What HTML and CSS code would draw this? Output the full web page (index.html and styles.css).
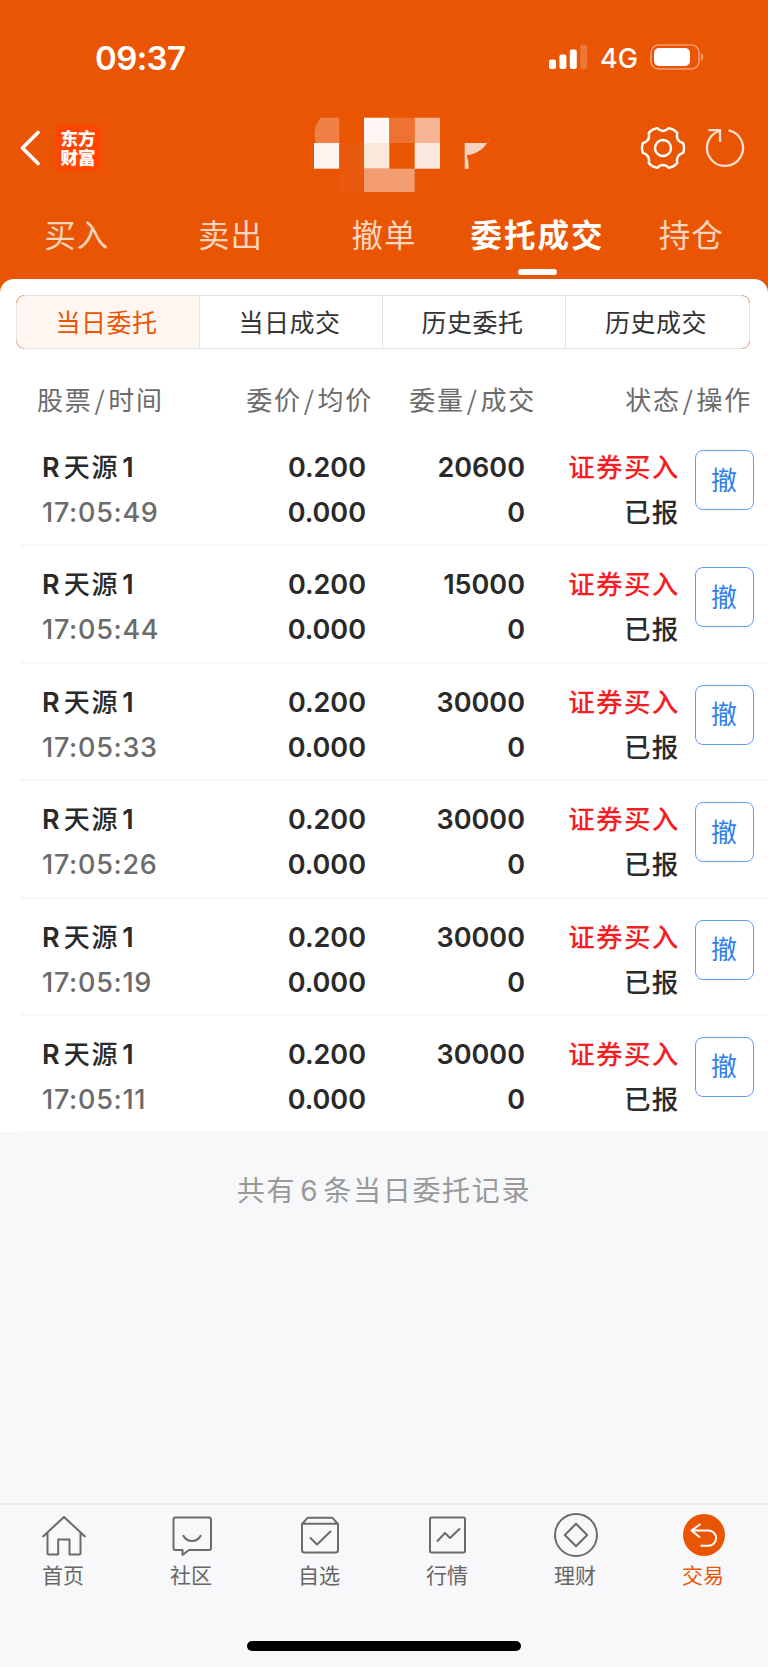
FILE: index.html
```html
<!DOCTYPE html>
<html lang="zh-CN">
<head>
  <meta charset="UTF-8" />
  <meta name="viewport" content="width=device-width, initial-scale=1.0" />
  <title>委托成交</title>
  <link rel="stylesheet" href="styles.css">
</head>
<body>
  <header class="header">
    <div class="status-bar">
      <div class="clock">09:37</div>
      <div class="status-icons">
        <svg class="signal" width="39" height="26" viewBox="0 0 39 26" fill="#fff">
          <rect x="0" y="15.5" width="7" height="9.5" rx="2" />
          <rect x="10.4" y="10.5" width="7" height="14.5" rx="2" />
          <rect x="20.8" y="5.5" width="7" height="19.5" rx="2" />
          <rect x="31.2" y="0.5" width="7" height="24.5" rx="2" opacity="0.2" />
        </svg>
        <span class="network">4G</span>
        <svg class="battery" width="55" height="26" viewBox="0 0 55 26">
          <rect x="1" y="1" width="48" height="24" rx="7.5" fill="none" stroke="#fff" stroke-opacity="0.42" stroke-width="1.6" />
          <rect x="4" y="4" width="36" height="18" rx="5" fill="#fff" />
          <path d="M51 9v8c3-1.200 3-6.800 0-8z" fill="#fff" opacity="0.45" />
        </svg>
      </div>
    </div>

    <div class="title-bar">
      <div class="title-left">
        <svg width="22" height="36" viewBox="0 0 22 36" fill="none" stroke="#fff" stroke-width="3.600" stroke-linecap="round" stroke-linejoin="round">
          <path d="M18 2.500L2.500 18l15.500 15.500" />
        </svg>
        <div class="logo">东方<br>财富</div>
      </div>
      <!-- masked account name -->
      <svg class="account" width="180" height="76" viewBox="0 0 180 76">
        <path d="M7 .7h18.300v25.300H2C-1 17 1 7 7 .7z" fill="#f08045" />
        <rect x="0" y="26" width="25.300" height="25.700" fill="#fef3ee" />
        <rect x="25.300" y="26" width="24.700" height="49" fill="#ea5a0e" />
        <rect x="50" y=".7" width="25.300" height="25.300" fill="#fff7f4" />
        <rect x="50" y="26" width="25.300" height="25.700" fill="#fae8dc" />
        <rect x="50" y="51.700" width="50.700" height="23.300" fill="#f29c70" />
        <rect x="75.300" y=".7" width="25.400" height="25.300" fill="#ee7231" />
        <rect x="100.700" y=".7" width="25.300" height="25.300" fill="#f6b492" />
        <rect x="100.700" y="26" width="25.300" height="25.700" fill="#fde9e0" />
        <path d="M150.700 26h22.300c-4.500 7-11 11-20.200 12.300q2.200 6.500 1.900 13.400h-4z" fill="#f9d3c1" />
        <path d="M173 26q3-4 5-9.500q-1 4-4 9.500z" fill="#f08045" />
      </svg>
      <div class="title-right">
        <svg width="46" height="46" viewBox="-23.500 -23.500 47 47" fill="none" stroke="#fff" stroke-width="2.500" stroke-linejoin="round">
          <path d="M6-20.300Q11.200-19.400 14.600-15.400Q12.700-7.300 20.600-4.900Q22.400 0 20.600 4.900Q12.700 7.300 14.600 15.400Q11.200 19.400 6 20.300Q0 14.600-6 20.300Q-11.200 19.400-14.600 15.400Q-12.700 7.300-20.600 4.900Q-22.400 0-20.600-4.900Q-12.700-7.300-14.600-15.400Q-11.200-19.400-6-20.300Q0-14.600 6-20.300Z" />
          <circle r="8.200" />
        </svg>
        <svg width="42" height="42" viewBox="-21 -21 42 42" fill="none" stroke="#fbe0d2" stroke-width="2.300">
          <path d="M3.500-17.700A18 18 0 1 1-6-17" />
          <path d="M-16.500-17.800H-5V-6" />
        </svg>
      </div>
    </div>

    <nav class="tabs">
      <a class="tab">买入</a>
      <a class="tab">卖出</a>
      <a class="tab">撤单</a>
      <a class="tab active">委托成交</a>
      <a class="tab">持仓</a>
    </nav>
  </header>

  <main class="panel">
    <div class="segments">
      <div class="segment active">当日委托</div>
      <div class="segment">当日成交</div>
      <div class="segment">历史委托</div>
      <div class="segment">历史成交</div>
    </div>

    <div class="list-head">
      <div>股票<i>/</i>时间</div>
      <div>委价<i>/</i>均价</div>
      <div>委量<i>/</i>成交</div>
      <div>状态<i>/</i>操作</div>
    </div>

    <div class="orders">
      <div class="order">
        <div class="stock"><b>R<span>天源</span>1</b><time>17:05:49</time></div>
        <div class="num">0.200<br>0.000</div>
        <div class="num">20600<br>0</div>
        <div class="state"><span class="buy">证券买入</span><br>已报</div>
        <button class="cancel">撤</button>
      </div>
      <div class="order">
        <div class="stock"><b>R<span>天源</span>1</b><time>17:05:44</time></div>
        <div class="num">0.200<br>0.000</div>
        <div class="num">15000<br>0</div>
        <div class="state"><span class="buy">证券买入</span><br>已报</div>
        <button class="cancel">撤</button>
      </div>
      <div class="order">
        <div class="stock"><b>R<span>天源</span>1</b><time>17:05:33</time></div>
        <div class="num">0.200<br>0.000</div>
        <div class="num">30000<br>0</div>
        <div class="state"><span class="buy">证券买入</span><br>已报</div>
        <button class="cancel">撤</button>
      </div>
      <div class="order">
        <div class="stock"><b>R<span>天源</span>1</b><time>17:05:26</time></div>
        <div class="num">0.200<br>0.000</div>
        <div class="num">30000<br>0</div>
        <div class="state"><span class="buy">证券买入</span><br>已报</div>
        <button class="cancel">撤</button>
      </div>
      <div class="order">
        <div class="stock"><b>R<span>天源</span>1</b><time>17:05:19</time></div>
        <div class="num">0.200<br>0.000</div>
        <div class="num">30000<br>0</div>
        <div class="state"><span class="buy">证券买入</span><br>已报</div>
        <button class="cancel">撤</button>
      </div>
      <div class="order">
        <div class="stock"><b>R<span>天源</span>1</b><time>17:05:11</time></div>
        <div class="num">0.200<br>0.000</div>
        <div class="num">30000<br>0</div>
        <div class="state"><span class="buy">证券买入</span><br>已报</div>
        <button class="cancel">撤</button>
      </div>
    </div>
  </main>

  <p class="summary">共有<span>6</span>条当日委托记录</p>

  <footer class="footer">
    <nav class="bottom-nav">
      <a class="nav-item">
        <svg viewBox="-23 -23 46 46">
          <path d="M-21.500 2L0-18L21.500 2M-16.500-2.500V18.500q0 1 1 1h9.700V4.500h11.300v15h10q1 0 1-1V-2.500" />
        </svg>
        <span>首页</span>
      </a>
      <a class="nav-item">
        <svg viewBox="-23 -23 46 46">
          <path d="M-16.500-17.500h33.500q2 0 2 2v28.500q0 2-2 2h-20l-6.500 5v-5h-7q-2 0-2-2v-28.500q0-2 2-2z" />
          <path d="M-8.500 1Q-5.500 6 0 6T8.500 1" stroke-width="2.200" stroke-linecap="round" />
        </svg>
        <span>社区</span>
      </a>
      <a class="nav-item">
        <svg viewBox="-23 -23 46 46">
          <path d="M-18-11l5.500-6.200h25l5.500 6.200v26q0 2.500-2.500 2.500h-31q-2.500 0-2.500-2.500zM-18-11.200h36" />
          <path d="M-10 2.500L-3 9.500L11-4" />
        </svg>
        <span>自选</span>
      </a>
      <a class="nav-item">
        <svg viewBox="-23 -23 46 46">
          <rect x="-18" y="-17.500" width="35" height="35" rx="1.500" />
          <path d="M-11 6.500L-3-2L2 3L12-6.500" />
        </svg>
        <span>行情</span>
      </a>
      <a class="nav-item">
        <svg viewBox="-23 -23 46 46">
          <circle r="21" />
          <path d="M0-11.200L11.200 0L0 11.200L-11.200 0z" />
        </svg>
        <span>理财</span>
      </a>
      <a class="nav-item active">
        <svg viewBox="-23 -23 46 46">
          <circle r="21" fill="#ea5504" stroke="none" />
          <path d="M-3.500-11L-12.500-4.500L-4 2.500M-12.500-4.500H4.500a7.600 7.600 0 0 1 0 15.200H-3.500" stroke="#fff" />
        </svg>
        <span>交易</span>
      </a>
    </nav>
    <div class="home-indicator"></div>
  </footer>
</body>
</html>
```

FILE: styles.css
```css
* {
  box-sizing: border-box;
}

body {
  margin: 0;
  height: 1667px;
  display: flex;
  flex-direction: column;
  font-family: Inter, "Noto Sans CJK SC", sans-serif;
  background: #f7f8fa;
  color: #2a2a2a;
}

svg {
  display: block;
  flex: none;
}

/* header */
.header {
  height: 293px;
  flex: none;
  background: #ea5504;
  color: #fff;
}

.status-bar {
  height: 110px;
  padding: 4px 63px 0 95px;
  display: flex;
  align-items: center;
  justify-content: space-between;
}

.clock {
  padding-top: 1px;
  font-size: 33px;
  font-weight: 600;
  line-height: 40px;
  letter-spacing: -0.600px;
}

.status-icons {
  display: flex;
  align-items: center;
}

.network {
  margin: 3px 12px 0 12px;
  font-size: 27px;
  font-weight: 500;
  line-height: 30px;
}

.title-bar {
  height: 76px;
  display: grid;
  grid-template-columns: 314px 180px 1fr;
  grid-template-rows: 76px;
  align-items: center;
}

.title-left {
  display: flex;
  align-items: center;
  padding-left: 20px;
}

.logo {
  width: 46px;
  height: 46px;
  margin-left: 13px;
  padding-top: 4px;
  border-radius: 8px;
  background: #ff4502;
  font-size: 17.500px;
  font-weight: 900;
  line-height: 19px;
  text-align: center;
}

.account {
  align-self: start;
  margin-top: 7px;
}

.title-right {
  display: flex;
  align-items: center;
  justify-content: flex-end;
  gap: 18px;
  padding-right: 22px;
}

.tabs {
  height: 93px;
  display: grid;
  grid-template-columns: repeat(5, 1fr);
}

.tab {
  display: flex;
  flex-direction: column;
  align-items: center;
  padding-top: 30px;
  font-size: 31.500px;
  font-weight: 400;
  line-height: 40px;
  letter-spacing: 1px;
  color: #fbd5c0;
}

.tab.active {
  color: #fff;
  font-weight: 700;
  letter-spacing: 2px;
}

.tab.active::after {
  content: "";
  width: 39px;
  height: 6px;
  margin-top: 13px;
  border-radius: 3px;
  background: #fff;
}

/* orders panel */
.panel {
  flex: none;
  height: 853px;
  margin-top: -14px;
  padding-top: 16px;
  border-radius: 14px 14px 0 0;
  background: #fff;
}

.segments {
  position: relative;
  height: 54px;
  margin: 0 18px 0 16px;
  display: grid;
  grid-template-columns: 183px 183px 183px 1fr;
  grid-template-rows: 52px;
  border: 1px solid #e2e3e8;
  border-radius: 8px;
}

/* orange rounded corners over the grey border */
.segments::after {
  content: "";
  position: absolute;
  inset: -1px;
  border: 1px solid #ee9468;
  border-radius: 8px;
  --dot: linear-gradient(#000, #000);
  mask: var(--dot) 0 0, var(--dot) 100% 0, var(--dot) 0 100%, var(--dot) 100% 100%;
  mask-size: 8px 8px;
  mask-repeat: no-repeat;
}

.segment {
  padding-right: 3px;
  font-size: 25px;
  line-height: 54px;
  letter-spacing: 0.500px;
  text-align: center;
  color: #333;
  border-right: 1px solid #e2e3e8;
}

.segment:last-child {
  border-right: none;
}

.segment.active {
  color: #ea5504;
  background: #fff5f1;
  border-radius: 7px 0 0 7px;
}

.list-head {
  height: 80px;
  padding: 31px 16px 0 37px;
  display: grid;
  grid-template-columns: 132px 204px 163px 1fr;
  font-size: 26px;
  line-height: 38px;
  letter-spacing: 1.700px;
  color: #6b6b6b;
  white-space: nowrap;
}

.list-head i {
  font-family: "Noto Sans CJK SC", sans-serif;
  font-style: normal;
  margin: 0 2px;
}

.list-head div + div {
  text-align: right;
}

.orders {
  margin-left: 20px;
}

.order {
  height: 117.400px;
  padding: 16px 14px 0 22px;
  display: grid;
  grid-template-columns: 132px 192px 159px 154.500px 59px;
  border-bottom: 2px solid #f7f7f8;
  font-size: 27px;
  font-weight: 600;
  line-height: 45px;
  white-space: nowrap;
}

.stock b,
.stock time {
  display: block;
  height: 45px;
}

.stock b {
  font-weight: 600;
}

.stock span {
  margin: 0 3px 0 4px;
  font-size: 26px;
  font-weight: 500;
  letter-spacing: 1.800px;
}

.stock time {
  font-weight: 500;
  letter-spacing: 0.700px;
  color: #6b6b6b;
}

.num,
.state {
  text-align: right;
}

.state {
  font-size: 26.500px;
  font-weight: 500;
  letter-spacing: 1.300px;
}

.buy {
  color: #f41e23;
}

.cancel {
  width: 59px;
  height: 60px;
  margin: 5px 0 0 15.500px;
  padding: 0 1px 3px 0;
  border: 1px solid #5f9ff0;
  border-radius: 8px;
  background: #fff;
  color: #2f80ed;
  font: 26px/54px "Noto Sans CJK SC", sans-serif;
}

.summary {
  margin: 38px 0 0;
  font-size: 28px;
  line-height: 42px;
  letter-spacing: 1.700px;
  text-align: center;
  color: #999;
}

.summary span {
  margin: 0 4px;
}

/* bottom bar */
.footer {
  height: 164px;
  margin-top: auto;
  border-top: 2px solid #e9eaec;
  background: #f8f8fa;
}

.bottom-nav {
  height: 136px;
  padding-top: 7px;
  display: grid;
  grid-template-columns: repeat(6, 1fr);
}

.nav-item {
  display: flex;
  flex-direction: column;
  align-items: center;
  font-size: 21px;
  line-height: 30px;
  color: #666;
}

.nav-item svg {
  width: 46px;
  height: 46px;
  margin-bottom: 3px;
  fill: none;
  stroke: #6b6b6b;
  stroke-width: 2;
  stroke-linejoin: round;
}

.nav-item span {
  padding-right: 2px;
}

.nav-item.active {
  color: #ea5504;
}

.home-indicator {
  width: 274px;
  height: 10px;
  margin: 0 auto;
  border-radius: 5px;
  background: #000;
}
```
